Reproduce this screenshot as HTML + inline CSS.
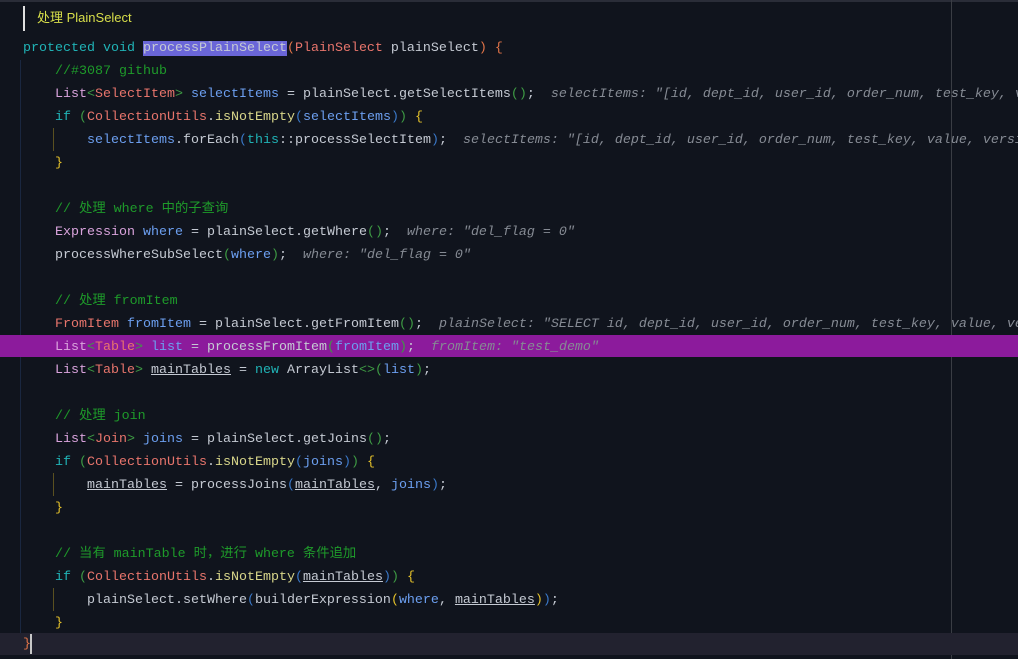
<!DOCTYPE html>
<html><head><meta charset="utf-8"><style>
html,body{margin:0;padding:0;background:#10141d;width:1018px;height:659px;overflow:hidden;position:relative}
.l{position:absolute;left:23px;width:995px;overflow:hidden;height:23px;line-height:23px;white-space:pre;font-family:"Liberation Mono","Noto Sans CJK SC",monospace;font-size:13.33px;color:#c5cad3}
.k{color:#20b3b6}.t{color:#d9a3dc}.g{color:#e8756c}.v{color:#6c9ff0}.m{color:#d8d68a}
.c{color:#1e9a2a}.h{color:#868b94;font-style:italic}.y{color:#e4c12a}.gr{color:#3e9b44}.b{color:#3a78c8}
.u{text-decoration:underline}.o{color:#e27448}
</style></head><body>
<div style="position:absolute;left:0;top:0;width:1018px;height:2px;background:#2a2d38"></div>
<div style="position:absolute;left:951px;top:0;width:1px;height:659px;background:#3a3d44"></div>
<div style="position:absolute;left:20px;top:60px;width:1px;height:573px;background:#1a2740"></div>
<div style="position:absolute;left:23px;top:6px;width:2px;height:25px;background:#e0e0e0"></div>
<div style="position:absolute;left:37px;top:7px;font-family:'Liberation Sans','Noto Sans CJK SC',sans-serif;font-size:13px;color:#d8df4a;line-height:22px">处理 PlainSelect</div>
<div style="position:absolute;left:0;top:335px;width:1018px;height:22px;background:#8c1b9c"></div>
<div style="position:absolute;left:0;top:633px;width:1018px;height:22px;background:#22222f"></div>
<div style="position:absolute;left:53px;top:128px;width:1px;height:23px;background:#5a5020"></div>
<div style="position:absolute;left:53px;top:473px;width:1px;height:23px;background:#5a5020"></div>
<div style="position:absolute;left:53px;top:588px;width:1px;height:23px;background:#5a5020"></div>
<div style="position:absolute;left:30px;top:634px;width:2px;height:20px;background:#c8c8c8"></div>

<div class="l" style="top:37px"><span class="k">protected void </span><span style="background:#6a66d8">processPlainSelect</span><span class="o">(</span><span class="g">PlainSelect</span> plainSelect<span class="o">)</span> <span class="o">{</span></div>
<div class="l" style="top:60px">    <span class="c">//#3087 github</span></div>
<div class="l" style="top:83px">    <span class="t">List</span><span class="gr">&lt;</span><span class="g">SelectItem</span><span class="gr">&gt;</span> <span class="v">selectItems</span> = plainSelect.getSelectItems<span class="gr">()</span>;  <span class="h">selectItems: "[id, dept_id, user_id, order_num, test_key, value, version]"</span></div>
<div class="l" style="top:106px">    <span class="k">if</span> <span class="gr">(</span><span class="g">CollectionUtils</span>.<span class="m">isNotEmpty</span><span class="b">(</span><span class="v">selectItems</span><span class="b">)</span><span class="gr">)</span> <span class="y">{</span></div>
<div class="l" style="top:129px">        <span class="v">selectItems</span>.forEach<span class="b">(</span><span class="k">this</span>::processSelectItem<span class="b">)</span>;  <span class="h">selectItems: "[id, dept_id, user_id, order_num, test_key, value, version]"</span></div>
<div class="l" style="top:152px">    <span class="y">}</span></div>
<div class="l" style="top:198px">    <span class="c">// 处理 where 中的子查询</span></div>
<div class="l" style="top:221px">    <span class="t">Expression</span> <span class="v">where</span> = plainSelect.getWhere<span class="gr">()</span>;  <span class="h">where: "del_flag = 0"</span></div>
<div class="l" style="top:244px">    processWhereSubSelect<span class="gr">(</span><span class="v">where</span><span class="gr">)</span>;  <span class="h">where: "del_flag = 0"</span></div>
<div class="l" style="top:290px">    <span class="c">// 处理 fromItem</span></div>
<div class="l" style="top:313px">    <span class="g">FromItem</span> <span class="v">fromItem</span> = plainSelect.getFromItem<span class="gr">()</span>;  <span class="h">plainSelect: "SELECT id, dept_id, user_id, order_num, test_key, value, version"</span></div>
<div class="l" style="top:336px">    <span class="t">List</span><span class="gr">&lt;</span><span class="g">Table</span><span class="gr">&gt;</span> <span class="v">list</span> = processFromItem<span class="gr">(</span><span class="v">fromItem</span><span class="gr">)</span>;  <span class="h">fromItem: "test_demo"</span></div>
<div class="l" style="top:359px">    <span class="t">List</span><span class="gr">&lt;</span><span class="g">Table</span><span class="gr">&gt;</span> <span class="u">mainTables</span> = <span class="k">new</span> ArrayList<span class="gr">&lt;&gt;(</span><span class="v">list</span><span class="gr">)</span>;</div>
<div class="l" style="top:405px">    <span class="c">// 处理 join</span></div>
<div class="l" style="top:428px">    <span class="t">List</span><span class="gr">&lt;</span><span class="g">Join</span><span class="gr">&gt;</span> <span class="v">joins</span> = plainSelect.getJoins<span class="gr">()</span>;</div>
<div class="l" style="top:451px">    <span class="k">if</span> <span class="gr">(</span><span class="g">CollectionUtils</span>.<span class="m">isNotEmpty</span><span class="b">(</span><span class="v">joins</span><span class="b">)</span><span class="gr">)</span> <span class="y">{</span></div>
<div class="l" style="top:474px">        <span class="u">mainTables</span> = processJoins<span class="b">(</span><span class="u">mainTables</span>, <span class="v">joins</span><span class="b">)</span>;</div>
<div class="l" style="top:497px">    <span class="y">}</span></div>
<div class="l" style="top:543px">    <span class="c">// 当有 mainTable 时，进行 where 条件追加</span></div>
<div class="l" style="top:566px">    <span class="k">if</span> <span class="gr">(</span><span class="g">CollectionUtils</span>.<span class="m">isNotEmpty</span><span class="b">(</span><span class="u">mainTables</span><span class="b">)</span><span class="gr">)</span> <span class="y">{</span></div>
<div class="l" style="top:589px">        plainSelect.setWhere<span class="b">(</span>builderExpression<span class="y">(</span><span class="v">where</span>, <span class="u">mainTables</span><span class="y">)</span><span class="b">)</span>;</div>
<div class="l" style="top:612px">    <span class="y">}</span></div>
<div class="l" style="top:633px"><span class="o">}</span></div>
</body></html>
